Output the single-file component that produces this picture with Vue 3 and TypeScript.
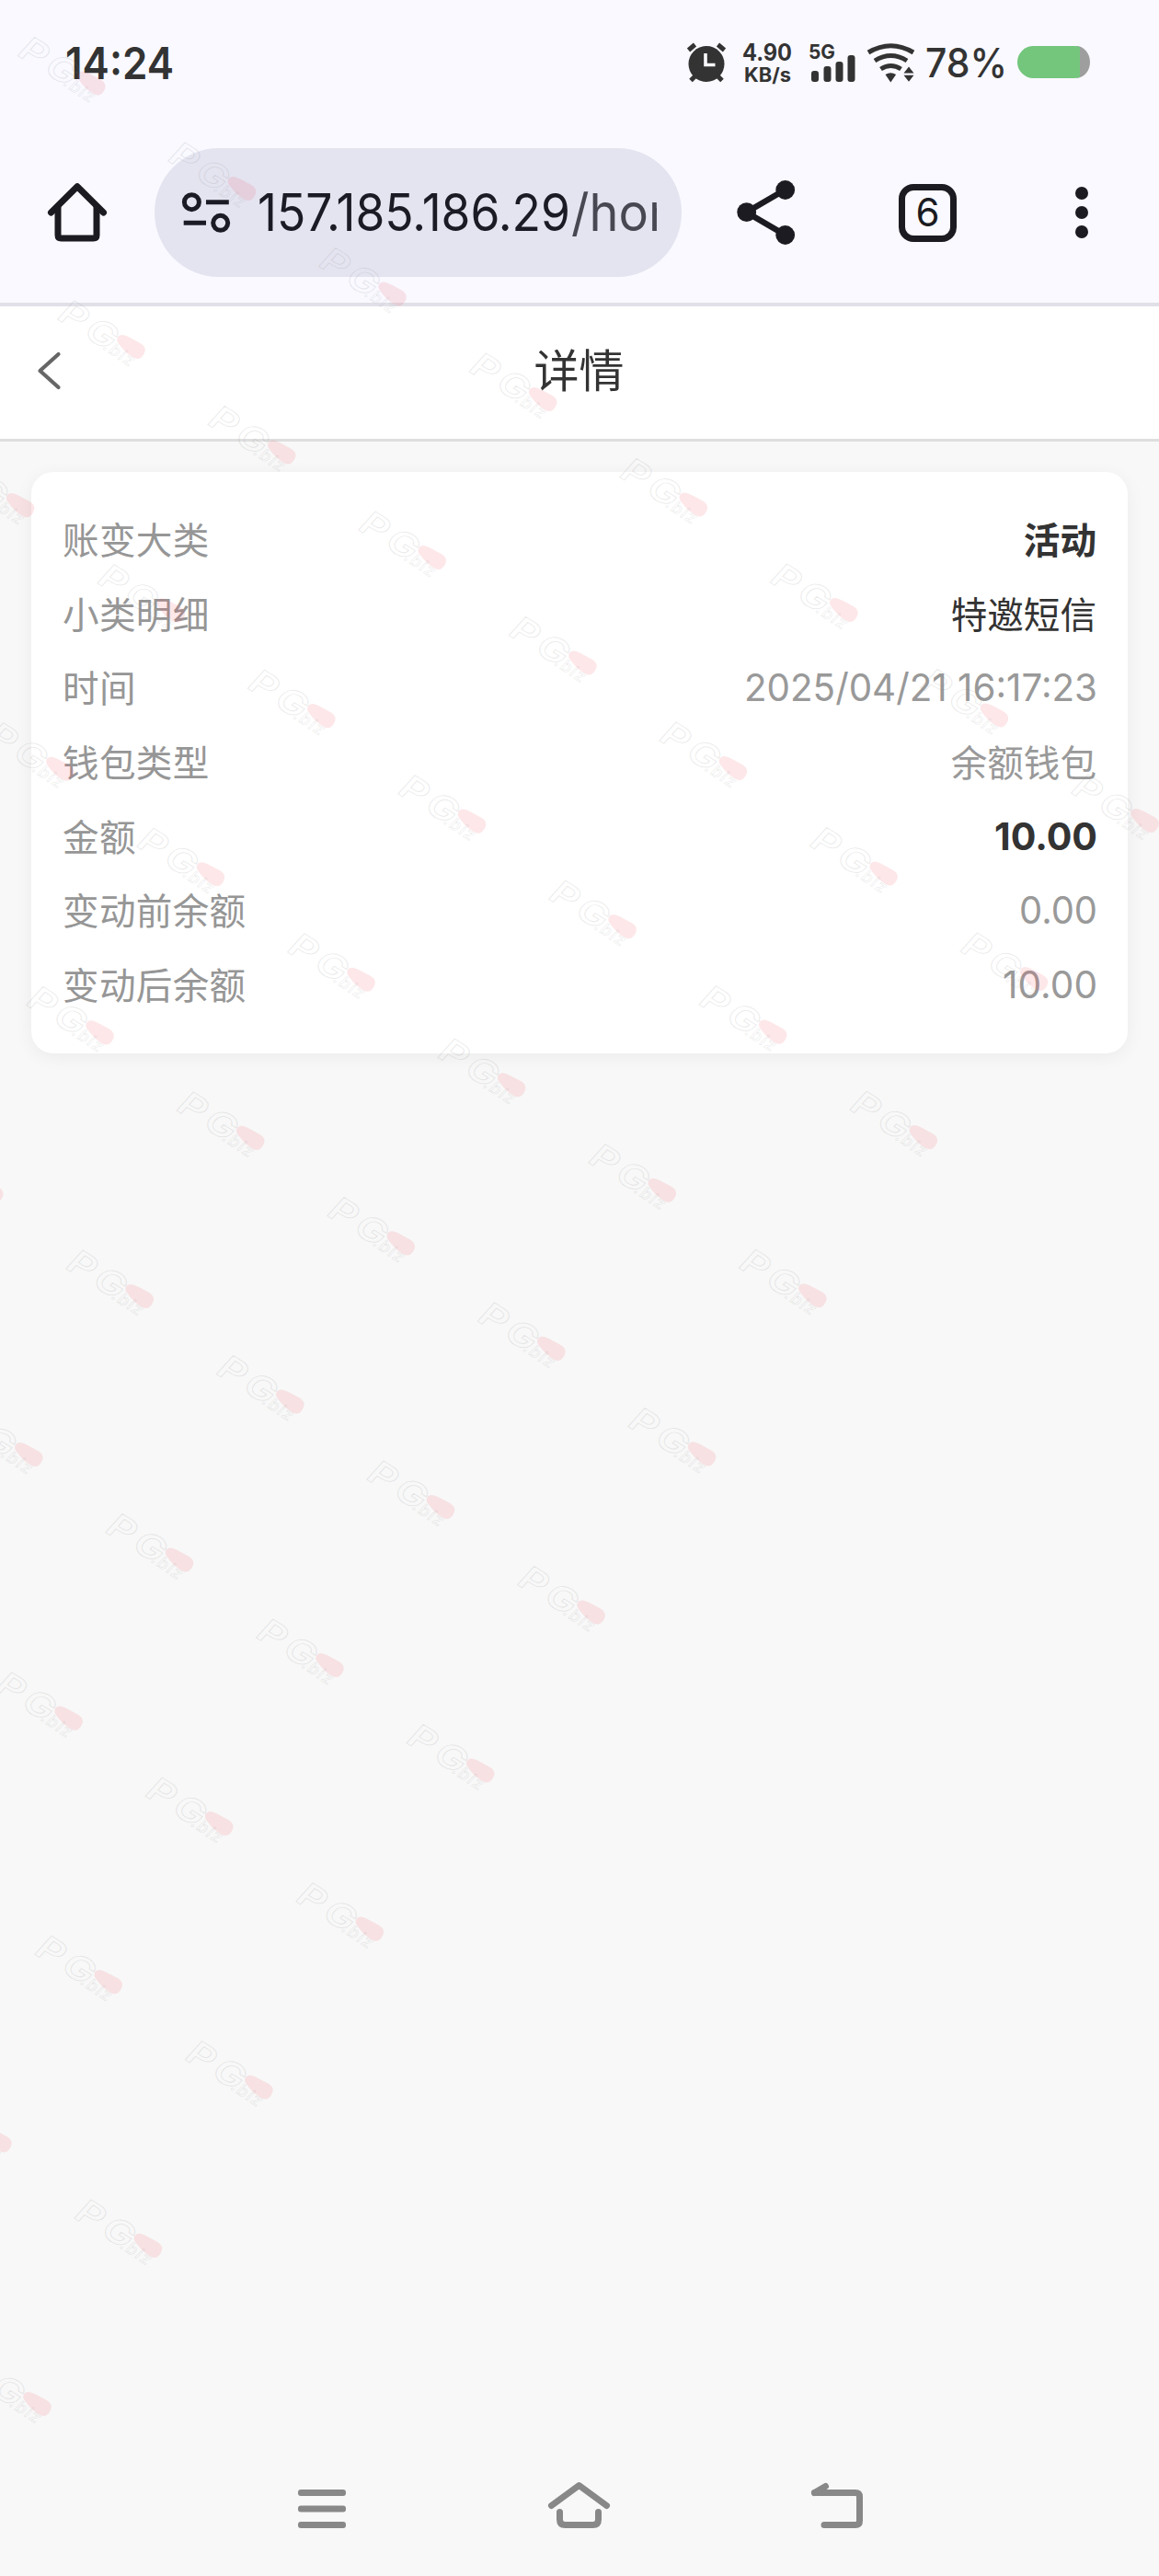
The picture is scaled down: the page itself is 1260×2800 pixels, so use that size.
<script setup lang="ts">
interface Row {
  label: string
  value: string
  tone: 'bold' | 'dark' | 'muted'
  width?: number
}

const rows: Row[] = [
  { label: '账变大类', value: '活动', tone: 'bold' },
  { label: '小类明细', value: '特邀短信', tone: 'dark' },
  { label: '时间', value: '2025/04/21 16:17:23', tone: 'muted', width: 380 },
  { label: '钱包类型', value: '余额钱包', tone: 'muted' },
  { label: '金额', value: '10.00', tone: 'bold', width: 108 },
  { label: '变动前余额', value: '0.00', tone: 'muted', width: 81 },
  { label: '变动后余额', value: '10.00', tone: 'muted', width: 99 },
]

// Watermark stamps sit on a slanted lattice that thins out toward the lower right.
const stamps: { x: number; y: number }[] = []
for (let n = 0; n <= 10; n++) {
  for (let m = -4; m <= 7 - n; m++) {
    const x = 98.5 + m * 163.6 + n * 43.2
    const y = 90 + m * 114.5 + n * 286.6
    if (x > -30) stamps.push({ x, y })
  }
}
</script>

<template>
  <div class="screen">
    <div class="status">
      <svg class="clock" width="115" height="40" viewBox="73 48 115 40">
        <text x="71" y="86" font-size="48" font-weight="600" textLength="118" lengthAdjust="spacingAndGlyphs">14:24</text>
      </svg>
      <svg class="indicators" width="439" height="42" viewBox="746 47 439 42">
        <g fill="#333">
          <circle cx="768" cy="69.500" r="19.500" />
          <path d="M748.500 54.500l7-6M787.500 54.500l-7-6M751 87.500l6-6M785 87.500l-6-6" stroke="#333" stroke-width="5" />
          <path d="M767 58v12.500h10.500" fill="none" stroke="#f9f9ff" stroke-width="3.600" />
          <text x="807" y="66" font-size="25" font-weight="700" textLength="54" lengthAdjust="spacingAndGlyphs">4.90</text>
          <text x="809" y="88.500" font-size="21" font-weight="700" textLength="51" lengthAdjust="spacingAndGlyphs">KB/s</text>
          <text x="879" y="64" font-size="22" font-weight="700" textLength="29" lengthAdjust="spacingAndGlyphs">5G</text>
          <rect x="882" y="77" width="8" height="12" rx="3" />
          <rect x="895.500" y="72" width="8" height="17" rx="3" />
          <rect x="908.500" y="67" width="8" height="22" rx="3" />
          <rect x="921.500" y="60" width="8" height="29" rx="3" />
          <g fill="none" stroke="#333" stroke-width="5">
            <path d="M944 57q24.500-14.500 49 0" />
            <path d="M951 66q17.500-11 35 0" />
            <path d="M957.500 75q11-7 22 0" />
          </g>
          <path d="M962.500 81q5.800-3.500 11.600 0l-5.800 8.500zM982.500 79.500h11l-5.500-7zM982.500 81.800h11l-5.500 7z" />
          <text x="1006" y="84" font-size="44" font-weight="500" textLength="89" lengthAdjust="spacingAndGlyphs">78%</text>
        </g>
        <path d="M1170 50a15 17.500 0 0 1 0 35z" fill="#9e9e9e" />
        <path d="M1123.500 50H1168a17.500 17.500 0 0 1 6 1.200v32.600a17.500 17.500 0 0 1-6 1.200H1123.500a17.500 17.500 0 0 1 0-35z" fill="#73c67c" />
      </svg>
    </div>

    <div class="toolbar">
      <svg class="home" width="64" height="64" viewBox="52 199 64 64" fill="none" stroke="#1b1b21" stroke-width="7" stroke-linecap="round" stroke-linejoin="round">
        <path d="M55.500 231L84 202.700 112.500 231" />
        <path d="M63 225v30.500q0 3.500 3.500 3.500h35q3.500 0 3.500-3.500V225" />
      </svg>
      <div class="omnibox">
        <svg class="tune" width="54" height="46" viewBox="197 208 54 46" fill="none" stroke="#1b1b25" stroke-width="5">
          <circle cx="208.400" cy="219.700" r="8" />
          <circle cx="239.700" cy="242.300" r="8" />
          <path d="M224 219.700h24.800M199.700 242.300H224" />
        </svg>
        <svg class="url" width="434" height="60" viewBox="280 201 434 60">
          <text x="280" y="251" font-size="56" fill="#1b1b25" textLength="340" lengthAdjust="spacingAndGlyphs">157.185.186.29</text>
          <text x="621" y="251" font-size="56" fill="#484852" textLength="163" lengthAdjust="spacingAndGlyphs">/home</text>
        </svg>
      </div>
      <svg class="share" width="64" height="72" viewBox="801 195 64 72" fill="#1b1b21">
        <path d="M853.500 206.300L811.500 230.700 853.500 255.300" fill="none" stroke="#1b1b21" stroke-width="6.500" />
        <circle cx="811.700" cy="230.700" r="10.400" />
        <circle cx="853.700" cy="206.500" r="10.400" />
        <circle cx="853.700" cy="255.500" r="10.400" />
      </svg>
      <div class="tabs">6</div>
      <svg class="more" width="14" height="58" viewBox="0 0 14 58" fill="#1b1b21">
        <circle cx="7" cy="8" r="7" /><circle cx="7" cy="29" r="7" /><circle cx="7" cy="50" r="7" />
      </svg>
    </div>

    <header class="title-bar">
      <svg width="27" height="42" viewBox="0 0 27 42" fill="none" stroke="#666" stroke-width="4.200" stroke-linecap="round" stroke-linejoin="round">
        <path d="M23.500 3L3.500 21l20 18" />
      </svg>
      <h1>详情</h1>
      <i></i>
    </header>

    <main>
      <section class="card">
        <div v-for="row in rows" :key="row.label" class="row">
          <span class="label">{{ row.label }}</span>
          <svg v-if="row.width" :class="['number', row.tone]" :width="row.width" height="40" :viewBox="`0 0 ${row.width} 40`">
            <text x="-2" y="33" font-size="41.500" :textLength="row.width + 4" lengthAdjust="spacingAndGlyphs">{{ row.value }}</text>
          </svg>
          <span v-else :class="['value', row.tone]">{{ row.value }}</span>
        </div>
      </section>
    </main>

    <nav class="nav">
      <svg width="52" height="52" viewBox="324 2697 52 52" fill="#888">
        <rect x="324" y="2706" width="52" height="7" rx="3" />
        <rect x="324" y="2723.500" width="52" height="7" rx="3" />
        <rect x="324" y="2741" width="52" height="7" rx="3" />
      </svg>
      <svg width="68" height="52" viewBox="595.500 2697 68 52" fill="none" stroke="#888" stroke-width="7" stroke-linecap="round" stroke-linejoin="round">
        <path d="M600 2723.500L630 2701.500 660 2723.500" />
        <path d="M609 2730.500v8q0 6 6 6h30q6 0 6-6v-8" />
      </svg>
      <svg width="57" height="52" viewBox="882 2697 57 52" fill="none" stroke="#888" stroke-width="7" stroke-linecap="round" stroke-linejoin="round">
        <path d="M885.500 2709.500H930q4.500 0 4.500 4.500v26q0 4.500-4.500 4.500H896" />
        <path d="M885.500 2709.500L897.500 2702.500" />
      </svg>
    </nav>

    <svg class="watermark" width="1260" height="2800" viewBox="0 0 1260 2800">
      <g v-for="(s, i) in stamps" :key="i" :transform="`translate(${s.x} ${s.y})`">
        <g fill="#808080" fill-opacity=".015" stroke="#808080" stroke-opacity=".16" stroke-width="1">
          <text transform="translate(-82 -31) rotate(32) skewX(-10) scale(1.2 1)" font-size="37" font-weight="600" letter-spacing="4.500">PG</text>
          <text transform="translate(-31 2) rotate(34) skewX(-10)" font-size="18" font-weight="500" letter-spacing="1.500" stroke-width=".7">.biz</text>
        </g>
        <path transform="rotate(33)" d="M-11-7Q-8-8-4-8L8-9Q17-9 17 0 17 8.500 8 8.500 0 8.500-6 6.500L-12 4.500Q-17 3-17-2-16-6-11-7Z" fill="#ee5564" fill-opacity=".14" />
      </g>
    </svg>
  </div>
</template>

<style>
body { margin: 0; background: #f8f8f8; }
</style>

<style scoped>
.screen {
  position: relative;
  display: flex;
  flex-direction: column;
  width: 1260px;
  height: 2800px;
  overflow: hidden;
  background: #f8f8f8;
  color: #333;
  font-family: Inter, "Noto Sans CJK SC", sans-serif;
}
svg { display: block; flex: none; overflow: visible; }
.status {
  display: flex;
  justify-content: space-between;
  align-items: center;
  box-sizing: border-box;
  height: 136px;
  padding: 0 75px 0 73px;
  background: #f9f9ff;
  fill: #333;
}
.toolbar {
  display: flex;
  align-items: center;
  box-sizing: border-box;
  height: 197px;
  padding: 0 0 3px 52px;
  border-bottom: 4px solid #e1e0e8;
  background: #f9f9ff;
}
.omnibox {
  display: flex;
  align-items: center;
  box-sizing: border-box;
  width: 573px;
  height: 140px;
  margin-left: 52px;
  padding-left: 29px;
  border-radius: 70px;
  background: #e4e4f0;
}
.url { margin-left: 29px; overflow: hidden; }
.share { margin-left: 60px; }
.tabs {
  display: flex;
  align-items: center;
  justify-content: center;
  box-sizing: border-box;
  width: 63px;
  height: 63px;
  margin-left: 112px;
  border: 7px solid #1b1b21;
  border-radius: 16px;
  color: #1b1b21;
  font-size: 42px;
  font-weight: 400;
  line-height: 1;
}
.more { margin-left: 129px; }
.title-bar {
  display: flex;
  align-items: center;
  justify-content: space-between;
  box-sizing: border-box;
  height: 147px;
  padding: 0 41px 4px 40px;
  border-bottom: 3px solid #dedede;
  background: #fff;
}
.title-bar i { width: 27px; }
h1 {
  margin: 0;
  padding-top: 2px;
  font-size: 49px;
  font-weight: 400;
  line-height: 60px;
}
main { flex: 1; padding: 33px 34px 0; }
.card {
  box-sizing: border-box;
  height: 632px;
  padding: 35px 34px 0 34px;
  border-radius: 24px;
  background: #fff;
  box-shadow: 0 4px 20px rgba(0, 0, 0, .055);
}
.row {
  display: flex;
  align-items: center;
  justify-content: space-between;
  height: 80.6px;
  font-size: 39.6px;
  line-height: 60px;
}
.label { color: #969696; letter-spacing: .3px; }
.number { margin-right: 1px; }
.muted { color: #999; fill: #999; }
.dark { color: #333; }
.bold { color: #333; fill: #333; font-weight: 700; }
.nav {
  display: flex;
  justify-content: space-between;
  box-sizing: border-box;
  height: 103px;
  padding: 0 321px 0 324px;
}
.watermark { position: absolute; inset: 0; pointer-events: none; }
</style>
